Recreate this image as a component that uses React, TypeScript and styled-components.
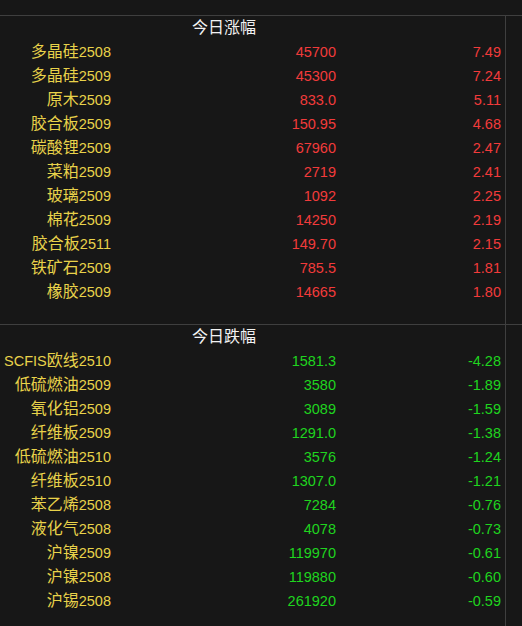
import React from "react";
import styled, { createGlobalStyle } from "styled-components";

const BG = "#171717";
const LINE = "#3f3f3f";

const GlobalStyle = createGlobalStyle`
  html, body {
    margin: 0;
    padding: 0;
    background: ${BG};
  }
`;

type Quote = { name: string; price: string; pct: string };

const rising: Quote[] = [
  { name: "多晶硅2508", price: "45700", pct: "7.49" },
  { name: "多晶硅2509", price: "45300", pct: "7.24" },
  { name: "原木2509", price: "833.0", pct: "5.11" },
  { name: "胶合板2509", price: "150.95", pct: "4.68" },
  { name: "碳酸锂2509", price: "67960", pct: "2.47" },
  { name: "菜粕2509", price: "2719", pct: "2.41" },
  { name: "玻璃2509", price: "1092", pct: "2.25" },
  { name: "棉花2509", price: "14250", pct: "2.19" },
  { name: "胶合板2511", price: "149.70", pct: "2.15" },
  { name: "铁矿石2509", price: "785.5", pct: "1.81" },
  { name: "橡胶2509", price: "14665", pct: "1.80" },
];

const falling: Quote[] = [
  { name: "SCFIS欧线2510", price: "1581.3", pct: "-4.28" },
  { name: "低硫燃油2509", price: "3580", pct: "-1.89" },
  { name: "氧化铝2509", price: "3089", pct: "-1.59" },
  { name: "纤维板2509", price: "1291.0", pct: "-1.38" },
  { name: "低硫燃油2510", price: "3576", pct: "-1.24" },
  { name: "纤维板2510", price: "1307.0", pct: "-1.21" },
  { name: "苯乙烯2508", price: "7284", pct: "-0.76" },
  { name: "液化气2508", price: "4078", pct: "-0.73" },
  { name: "沪镍2509", price: "119970", pct: "-0.61" },
  { name: "沪镍2508", price: "119880", pct: "-0.60" },
  { name: "沪锡2508", price: "261920", pct: "-0.59" },
];

const Page = styled.div`
  width: 522px;
  height: 626px;
  background: ${BG};
  display: flex;
  flex-direction: column;
  overflow: hidden;
`;

const TopGap = styled.div`
  height: 15px;
  flex: none;
  border-bottom: 1px solid ${LINE};
`;

const Section = styled.section<{ $height?: number; $divider?: boolean }>`
  display: flex;
  flex: ${(p) => (p.$height ? "none" : "1")};
  height: ${(p) => (p.$height ? `${p.$height}px` : "auto")};
  border-bottom: ${(p) => (p.$divider ? `1px solid ${LINE}` : "none")};
`;

const Board = styled.div`
  width: 505px;
  border-right: 1px solid ${LINE};
  display: grid;
  grid-template-columns: 111px 225px 165px;
  grid-auto-rows: 24px;
  align-content: start;
  font-family: "Noto Sans CJK SC", sans-serif;
  font-size: 16px;
  line-height: 21px;
`;

const Title = styled.div`
  grid-column: 1 / -1;
  padding-left: 192px;
  color: #f2f2f2;
`;

const Cell = styled.div<{ $tone: string }>`
  text-align: right;
  white-space: nowrap;
  color: ${(p) => p.$tone};
`;

const Latin = styled.span`
  font-family: "Liberation Sans", sans-serif;
  font-size: 14.5px;
`;

const YELLOW = "#e8d24a";
const RED = "#f23b3b";
const GREEN = "#1fd41f";

const Mixed = ({ text }: { text: string }) => (
  <>
    {text.split(/([\x20-\x7e]+)/).map((part, i) =>
      /^[\x20-\x7e]+$/.test(part) ? <Latin key={i}>{part}</Latin> : part
    )}
  </>
);

const Table = ({ title, rows, tone }: { title: string; rows: Quote[]; tone: string }) => (
  <Board>
    <Title>{title}</Title>
    {rows.map((r) => (
      <React.Fragment key={r.name}>
        <Cell $tone={YELLOW}>
          <Mixed text={r.name} />
        </Cell>
        <Cell $tone={tone}>
          <Latin>{r.price}</Latin>
        </Cell>
        <Cell $tone={tone}>
          <Latin>{r.pct}</Latin>
        </Cell>
      </React.Fragment>
    ))}
  </Board>
);

export default function App() {
  return (
    <Page>
      <GlobalStyle />
      <TopGap />
      <Section $height={308} $divider>
        <Table title="今日涨幅" rows={rising} tone={RED} />
      </Section>
      <Section>
        <Table title="今日跌幅" rows={falling} tone={GREEN} />
      </Section>
    </Page>
  );
}
